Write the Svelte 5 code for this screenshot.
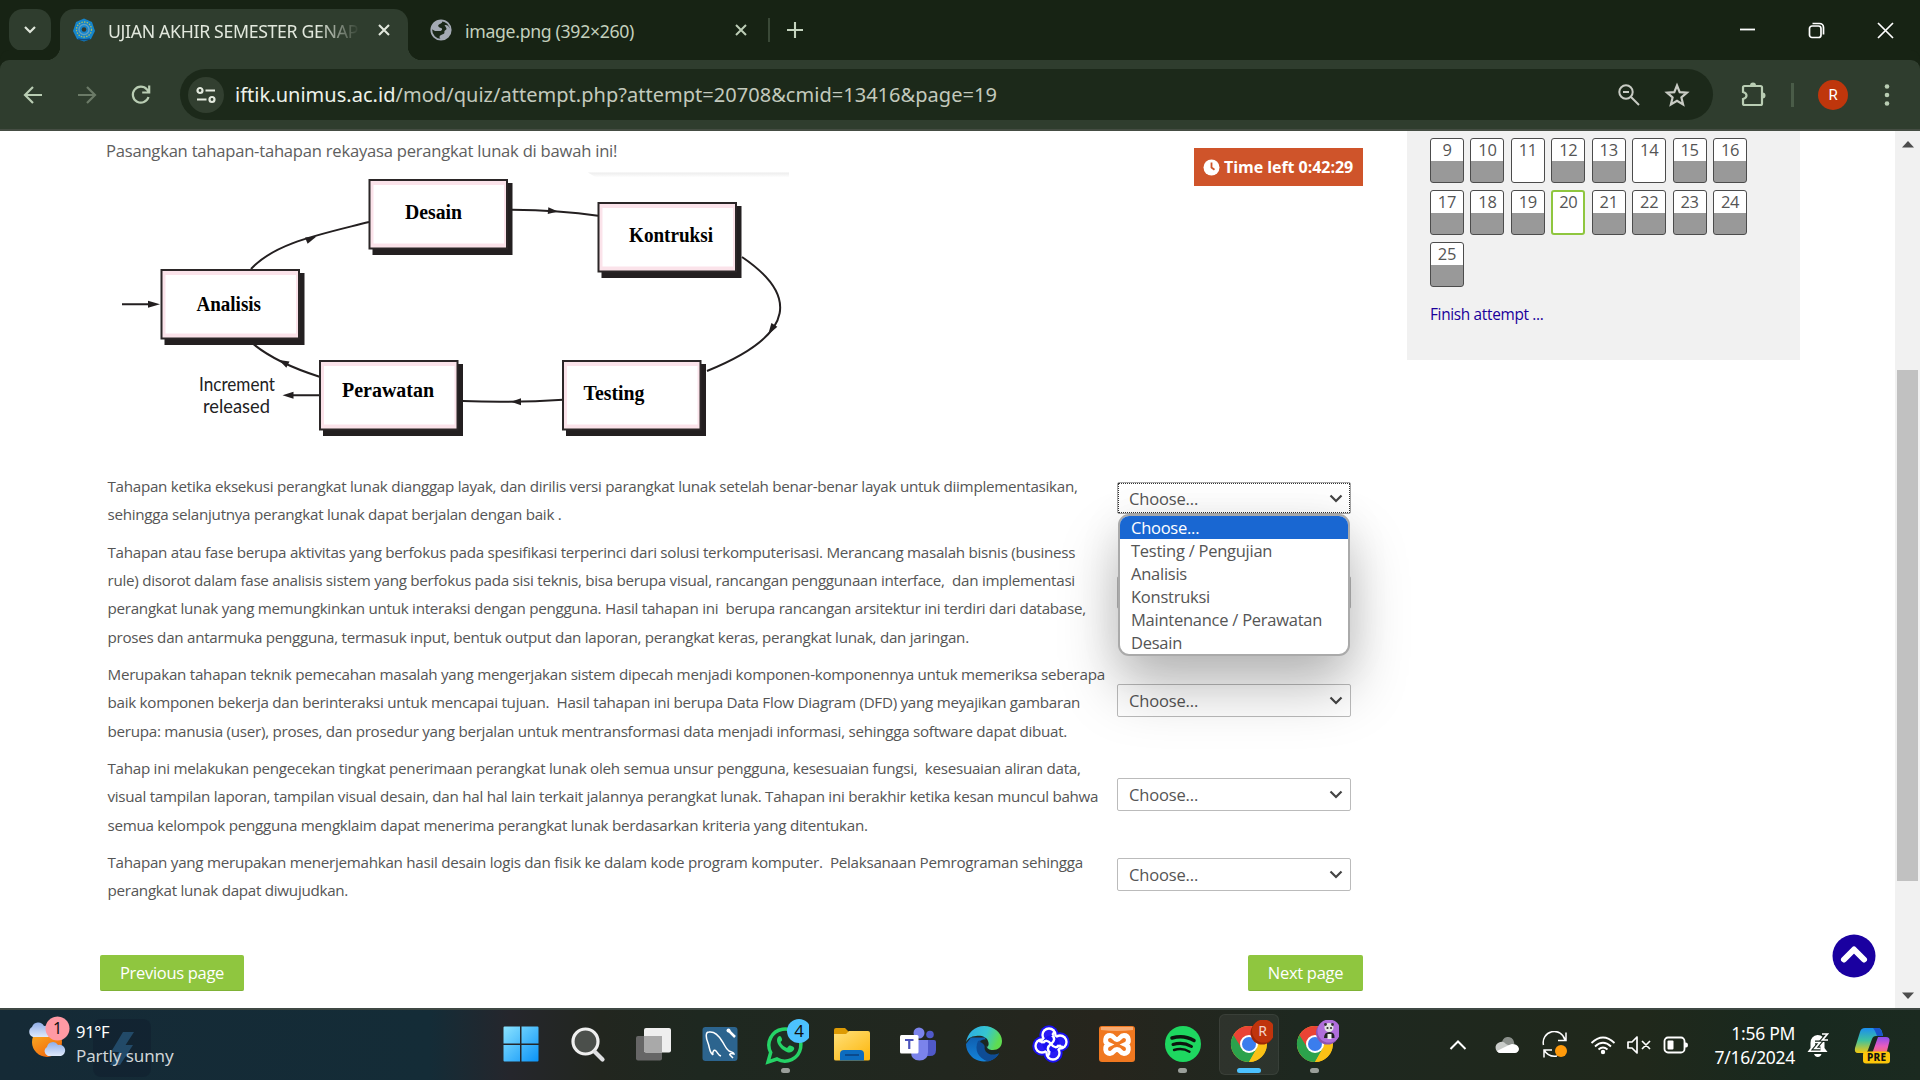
<script>
  const rows = [
    {
      lines: [
        'Tahapan ketika eksekusi perangkat lunak dianggap layak, dan dirilis versi parangkat lunak setelah benar-benar layak untuk diimplementasikan,',
        'sehingga selanjutnya perangkat lunak dapat berjalan dengan baik .'
      ],
      open: true
    },
    {
      lines: [
        'Tahapan atau fase berupa aktivitas yang berfokus pada spesifikasi terperinci dari solusi terkomputerisasi. Merancang masalah bisnis (business',
        'rule) disorot dalam fase analisis sistem yang berfokus pada sisi teknis, bisa berupa visual, rancangan penggunaan interface,\u00a0 dan implementasi',
        'perangkat lunak yang memungkinkan untuk interaksi dengan pengguna. Hasil tahapan ini\u00a0 berupa rancangan arsitektur ini terdiri dari database,',
        'proses dan antarmuka pengguna, termasuk input, bentuk output dan laporan, perangkat keras, perangkat lunak, dan jaringan.'
      ]
    },
    {
      lines: [
        'Merupakan tahapan teknik pemecahan masalah yang mengerjakan sistem dipecah menjadi komponen-komponennya untuk memeriksa seberapa',
        'baik komponen bekerja dan berinteraksi untuk mencapai tujuan.\u00a0 Hasil tahapan ini berupa Data Flow Diagram (DFD) yang meyajikan gambaran',
        'berupa: manusia (user), proses, dan prosedur yang berjalan untuk mentransformasi data menjadi informasi, sehingga software dapat dibuat.'
      ]
    },
    {
      lines: [
        'Tahap ini melakukan pengecekan tingkat penerimaan perangkat lunak oleh semua unsur pengguna, kesesuaian fungsi,\u00a0 kesesuaian aliran data,',
        'visual tampilan laporan, tampilan visual desain, dan hal hal lain terkait jalannya perangkat lunak. Tahapan ini berakhir ketika kesan muncul bahwa',
        'semua kelompok pengguna mengklaim dapat menerima perangkat lunak berdasarkan kriteria yang ditentukan.'
      ]
    },
    {
      lines: [
        'Tahapan yang merupakan menerjemahkan hasil desain logis dan fisik ke dalam kode program komputer.\u00a0 Pelaksanaan Pemrograman sehingga',
        'perangkat lunak dapat diwujudkan.'
      ]
    }
  ];
  const options = ['Choose...', 'Testing / Pengujian', 'Analisis', 'Konstruksi', 'Maintenance / Perawatan', 'Desain'];
  // The first row of the grid is scrolled away except for its bottom edge.
  const hiddenRow = Array.from({ length: 8 });
  const questions = Array.from({ length: 17 }, (_, i) => i + 9);
  const unanswered = [11, 14, 20];
  const stages = [
    { x: 368.5, y: 179, label: 'Desain', tx: 405, ty: 219, w: 57 },
    { x: 597.5, y: 202, label: 'Kontruksi', tx: 629, ty: 241.5, w: 84 },
    { x: 160.5, y: 269, label: 'Analisis', tx: 196.5, ty: 310.5, w: 64.5 },
    { x: 319, y: 360, label: 'Perawatan', tx: 342, ty: 396.5, w: 92 },
    { x: 562, y: 360, label: 'Testing', tx: 583.5, ty: 399.5, w: 61 }
  ];
  const petals = [[18, 11], [29, 18], [22, 29], [11, 22]];
</script>

{#snippet chrome()}
  <circle cx="20" cy="20" r="18" fill="#fbc116" />
  <path d="M4.400 11a18 18 0 0 0 15.600 27l8-13.500-8-4.500z" fill="#2ba24c" />
  <path d="M20 12h15.900A18 18 0 0 1 20 38l7.600-13.500z" fill="#fbc116" />
  <path d="M4.400 11a18 18 0 0 1 31.600 1H20l-7.500 12z" fill="#ea4335" />
  <circle cx="20" cy="20" r="9" fill="#fff" />
  <circle cx="20" cy="20" r="7" fill="#3b7ded" />
{/snippet}

<div class="screen">
  <header class="tabs">
    <button class="tab-search" aria-label="Search tabs">
      <svg width="14" height="10" viewBox="0 0 14 10"><path d="m2 2 5 5 5-5" fill="none" stroke="#dfe6da" stroke-width="2.200" /></svg>
    </button>
    <div class="tab active">
      <svg class="favicon" width="24" height="24" viewBox="0 0 24 24">
        <path d="M12 0.500 20 4l3 9-4 8-7 2.500-7-2.500-4-8 3-9z" fill="#1585cc" />
        <circle cx="12" cy="11.500" r="7.500" fill="none" stroke="#a9bb62" stroke-width="1.300" stroke-dasharray="1.500 1.200" />
        <circle cx="12" cy="11.500" r="5" fill="none" stroke="#5f9fc4" stroke-width="1.400" />
        <circle cx="12" cy="11.500" r="2.300" fill="#33392f" />
        <path d="M6 21q6 1.500 12 0" stroke="#0d4d85" fill="none" stroke-width="1.500" />
      </svg>
      <span class="tab-title fade">UJIAN AKHIR SEMESTER GENAP</span>
      <svg class="x" width="14" height="14" viewBox="0 0 14 14"><path d="m2 2 10 10M12 2 2 12" stroke="#e2e8dd" stroke-width="2.100" /></svg>
    </div>
    <div class="tab second">
      <svg class="favicon" width="22" height="22" viewBox="0 0 22 22">
        <circle cx="11" cy="11" r="9.700" fill="#1b2818" stroke="#a4aab4" stroke-width="1.800" />
        <path d="M12 1.500c1 2-1 3-3 4s0 3 2 3.500 1 3-1 3H5l-3.500-2C2 5 6 1 12 1.500zM15 6c3 0 5 2 5.500 5s-2 7-6 9c-3 1-5 0-5-2s2-2 4-3 0-2 1.500-3.500 2-1 1-3-2-2.500-1-2.500z" fill="#a4aab4" />
      </svg>
      <span class="tab-title">image.png (392×260)</span>
      <svg class="x" width="14" height="14" viewBox="0 0 14 14"><path d="m2 2 10 10M12 2 2 12" stroke="#bccdb6" stroke-width="2" /></svg>
    </div>
    <i class="tab-sep"></i>
    <svg class="plus" width="18" height="18" viewBox="0 0 18 18"><path d="M9 1v16M1 9h16" stroke="#c5d4bf" stroke-width="2.100" /></svg>
    <div class="window">
      <svg width="17" height="17" viewBox="0 0 17 17"><path d="M1 7.500h15" stroke="#fff" stroke-width="1.800" /></svg>
      <svg width="17" height="17" viewBox="0 0 17 17"><rect x="1.500" y="4" width="11.500" height="11.500" rx="2.500" fill="none" stroke="#fff" stroke-width="1.700" /><path d="M4.500 1.500h7a4 4 0 0 1 4 4v7" fill="none" stroke="#fff" stroke-width="1.700" /></svg>
      <svg width="17" height="17" viewBox="0 0 17 17"><path d="m1 1 15 15M16 1 1 16" stroke="#fff" stroke-width="1.700" /></svg>
    </div>
  </header>

  <nav class="toolbar">
    <svg width="22" height="22" viewBox="0 0 22 22"><path d="M20 11H4M11 3l-8 8 8 8" fill="none" stroke="#b9cdb3" stroke-width="2.200" /></svg>
    <svg width="22" height="22" viewBox="0 0 22 22"><path d="M2 11h16M11 3l8 8-8 8" fill="none" stroke="#6b7a67" stroke-width="2.200" /></svg>
    <svg width="22" height="22" viewBox="0 0 22 22"><path d="M18.500 13a8 8 0 1 1-1.500-7.500L19 8M19.200 1.500V8.500h-7" fill="none" stroke="#b9cdb3" stroke-width="2.200" /></svg>
    <div class="omnibox">
      <span class="site">
        <svg width="20" height="18" viewBox="0 0 20 18"><g fill="none" stroke="#e3e9de" stroke-width="2.200"><circle cx="4" cy="4.500" r="2.500" /><path d="M9.500 4.500H19M1 13.500h9.500" /><circle cx="16" cy="13.500" r="2.500" /></g></svg>
      </span>
      <span class="url"><b>iftik.unimus.ac.id</b>/mod/quiz/attempt.php?attempt=20708&amp;cmid=13416&amp;page=19</span>
      <svg width="22" height="22" viewBox="0 0 22 22"><g fill="none" stroke="#c8cbc4" stroke-width="2"><circle cx="8" cy="8" r="6.700" /><path d="m13 13 8 8M5 8h6" /></g></svg>
      <svg class="star" width="26" height="26" viewBox="0 0 26 26"><path d="m13 3.500 2.700 6.700 7.200.5-5.500 4.700 1.700 7.100-6.100-3.800-6.100 3.800 1.700-7.100L3.100 10.700l7.200-.5z" fill="none" stroke="#c8cbc4" stroke-width="2.200" /></svg>
    </div>
    <svg class="puzzle" width="28" height="28" viewBox="0 0 28 28"><path d="M4 6.500q0-1.500 1.500-1.500h16q1.500 0 1.500 1.500v16q0 1.500-1.500 1.500h-16Q4 24 4 22.500v-4.500q3.500-1 3.500-3.500T4 11z" fill="none" stroke="#b9cdb3" stroke-width="2.200" /><path d="M11 4.500a3 3 0 0 1 6 0zM23.500 11.500a3 3 0 0 1 0 6z" fill="#b9cdb3" /></svg>
    <i class="bar-sep"></i>
    <span class="avatar">R</span>
    <svg class="dots" width="6" height="22" viewBox="0 0 6 22"><g fill="#b9cdb3"><circle cx="3" cy="2.500" r="2.300" /><circle cx="3" cy="11" r="2.300" /><circle cx="3" cy="19.500" r="2.300" /></g></svg>
  </nav>

  <main class="page">
    <section class="quiz">
      <div class="head">
        <p class="prompt">Pasangkan tahapan-tahapan rekayasa perangkat lunak di bawah ini!</p>
        <div class="timer">
          <svg width="17" height="17" viewBox="0 0 17 17"><circle cx="8.500" cy="8.500" r="8" fill="#fff" /><path d="M8.500 3.500v5l3 2.300" fill="none" stroke="#cf542a" stroke-width="1.800" /></svg>
          <span>Time left 0:42:29</span>
        </div>
      </div>
      <svg class="diagram" width="700" height="270" viewBox="100 170 700 270">
        <defs>
          <linearGradient id="haze" x2="0" y2="1"><stop stop-color="#ececec" /><stop offset="1" stop-color="#fff" /></linearGradient>
        </defs>
        <path d="M588 172.500h201v5H596z" fill="url(#haze)" />
        <g fill="none" stroke="#231f20" stroke-width="2">
          <path d="M251 269C275 243 318 235 369 222M512 209.700Q560 210 598 215.700M742 257C795 293 801 333 707 371M563 399.700Q512 403 463 401M319.500 376.700Q276 363 252 343M122 304.300h30M319.500 395.300H292" />
        </g>
        <g fill="#231f20">
          <path d="m0 0-11-3.500v7z" transform="translate(316.500 236.500) rotate(-22)" />
          <path d="m0 0-10-3.300v6.600z" transform="translate(558 211.500) rotate(5)" />
          <path d="m0 0-12-3.500v7z" transform="translate(768 335) rotate(122)" />
          <path d="m0 0 10-3.500v7z" transform="translate(511 401.700)" />
          <path d="m0 0-10-3.500v7z" transform="translate(279 360) rotate(207)" />
          <path d="m160 304.300-12-3.500v7zM282.500 395.300l11-3.500v7z" />
        </g>
        {#each stages as s}
          <rect x={s.x + 4} y={s.y + 4} width="140" height="72" fill="#231f20" />
          <rect x={s.x + 1} y={s.y + 1} width="137.500" height="68.500" fill="#fbe3ea" stroke="#2b2627" stroke-width="2" />
          <rect x={s.x + 5} y={s.y + 6} width="130.500" height="58.500" fill="#fff" />
          <text class="stage" x={s.tx} y={s.ty} textLength={s.w} lengthAdjust="spacingAndGlyphs">{s.label}</text>
        {/each}
        <text class="note" x="199" y="390.500" textLength="76" lengthAdjust="spacingAndGlyphs">Increment</text>
        <text class="note" x="203" y="413" textLength="67" lengthAdjust="spacingAndGlyphs">released</text>
      </svg>

      <div class="matches">
        {#each rows as row}
          <div class="match">
            <div class="text">
              {#each row.lines as line}<p>{line}</p>{/each}
            </div>
            <div class="answer">
              <div class="select" class:open={row.open}>
                <span>Choose...</span>
                <svg width="14" height="9" viewBox="0 0 14 9"><path d="m1.500 1.500 5.500 5.500 5.500-5.500" fill="none" stroke="#444" stroke-width="2.200" /></svg>
              </div>
              {#if row.open}
                <ul class="menu">
                  {#each options as o, i}<li class:picked={i === 0}>{o}</li>{/each}
                </ul>
              {/if}
            </div>
          </div>
        {/each}
      </div>
      <div class="buttons">
        <button class="green">Previous page</button>
        <button class="green next">Next page</button>
      </div>
    </section>

    <aside class="panel">
      <div class="grid">
        {#each hiddenRow as _}<span class="q"></span>{/each}
        {#each questions as q}
          <span class="q" class:blank={unanswered.includes(q)} class:current={q === 20}>{q}</span>
        {/each}
      </div>
      <a class="finish" href="#finish">Finish attempt ...</a>
    </aside>

    <div class="scroll">
      <svg width="12" height="8" viewBox="0 0 12 8"><path d="M6 1 12 7.500H0z" fill="#4d4d4d" /></svg>
      <i class="thumb"></i>
      <svg class="down" width="12" height="8" viewBox="0 0 12 8"><path d="M6 7 0 .5h12z" fill="#4d4d4d" /></svg>
    </div>
    <svg class="to-top" width="44" height="44" viewBox="0 0 44 44"><circle cx="22" cy="22" r="21.500" fill="#1a00a0" /><path d="m12 25.500 10-10 10 10" fill="none" stroke="#fff" stroke-width="6" stroke-linejoin="round" stroke-linecap="round" /></svg>
  </main>

  <footer class="taskbar">
    <div class="weather">
      <svg width="46" height="50" viewBox="0 0 46 50">
        <defs>
          <linearGradient id="sun" x2=".6" y2="1"><stop stop-color="#fbb829" /><stop offset="1" stop-color="#f26a0c" /></linearGradient>
          <linearGradient id="cloud" x2="0" y2="1"><stop stop-color="#8faee8" /><stop offset="1" stop-color="#dfe9fb" /></linearGradient>
        </defs>
        <circle cx="21" cy="29" r="15" fill="url(#sun)" />
        <path d="M7 24a5.500 5.500 0 0 1-1-10 6.500 6.500 0 0 1 12-1 5 5 0 0 1 4 11z" fill="url(#cloud)" />
        <path d="M22 43a5 5 0 0 1-1-9 6 6 0 0 1 11-2 5 5 0 0 1 3 11z" fill="url(#cloud)" />
        <circle cx="31.500" cy="15.500" r="12" fill="#ff99a4" />
        <text x="31.500" y="21" text-anchor="middle" font-size="16" fill="#111">1</text>
      </svg>
      <div class="ghost">
        <svg width="58" height="58" viewBox="0 0 58 58"><rect width="58" height="58" rx="8" fill="#11202f" /><path d="M30 13h11L28 33H18zM31 26h9L27 46H17z" fill="#2c5f8a" /></svg>
      </div>
      <div class="forecast"><span>91°F</span><span class="dim">Partly sunny</span></div>
    </div>

    <div class="apps">
      <div class="app">
        <svg width="40" height="40" viewBox="0 0 40 40">
          <defs><linearGradient id="win" x2="1" y2="1"><stop stop-color="#8be3ff" /><stop offset="1" stop-color="#0a93f8" /></linearGradient></defs>
          <path d="M2.500 3.500a1 1 0 0 1 1-1H19v17H2.500zM20.500 2.500h16a1 1 0 0 1 1 1v16h-17zM2.500 21H19v16.500H3.500a1 1 0 0 1-1-1zM20.500 21h17v15.500a1 1 0 0 1-1 1h-16z" fill="url(#win)" />
        </svg>
      </div>
      <div class="app">
        <svg width="40" height="40" viewBox="0 0 40 40"><circle cx="18.500" cy="17.500" r="12.500" fill="#4b4f4b" stroke="#efefef" stroke-width="3.200" /><path d="m28 28 7.500 7.500" stroke="#dfe0e2" stroke-width="4.200" stroke-linecap="round" /></svg>
      </div>
      <div class="app">
        <svg width="40" height="40" viewBox="0 0 40 40"><rect x="3" y="12" width="26" height="24.500" rx="2" fill="#666" /><rect x="11" y="4" width="27" height="24.500" rx="2" fill="#efefef" /><path d="M11 12h18v16.500H13a2 2 0 0 1-2-2z" fill="#a9a9a9" /></svg>
      </div>
      <div class="app">
        <svg width="40" height="40" viewBox="0 0 40 40"><rect x="2.500" y="3" width="35" height="34" rx="3" fill="#2c648e" /><g fill="none" stroke="#fff" stroke-width="1.500"><path d="M13 31c-4-3-3-7-5-12S5 8 9 8c6-1 10 4 13 9 3 4 3 7 7 10 3 1 5 2 5 3-3-1-5 0-4 1l3 3M13 31c-1-3 1-6 3-4s2 4 5 5" /></g><path d="m28 6 7 7" stroke="#fff" stroke-width="2.500" /><circle cx="28.500" cy="6.500" r="2" fill="#fff" /></svg>
      </div>
      <div class="app">
        <svg width="46" height="50" viewBox="0 0 46 50">
          <path d="m5 43 2.700-9.500A16 16 0 1 1 14 40z" fill="#1f2d22" stroke="#25d366" stroke-width="3.500" />
          <path d="M15 18c2-2 3-1 4 2 .5 2-1 2-1.500 3 1 3 4 5 6.500 6 1-1 2-3 3-2.500 3 1 5 1.500 4 4s-4 3-6 3c-6-2-11-8-11-12 0-1 0-2 1-3.500z" fill="#25d366" />
          <circle cx="36" cy="12" r="12" fill="#4cc2ff" /><text x="36" y="18" text-anchor="middle" font-size="17" fill="#111">4</text>
        </svg><i class="dot"></i>
      </div>
      <div class="app">
        <svg width="40" height="40" viewBox="0 0 40 40"><defs><linearGradient id="fold" x2=".8" y2="1"><stop stop-color="#ffe07a" /><stop offset="1" stop-color="#fdb913" /></linearGradient></defs><path d="M2 6q0-2 2-2h9l4 4v8H2z" fill="#dd9a04" /><path d="M2 10h12l3-3h19q2 0 2 2v26q0 1.500-2 1.500H4q-2 0-2-1.500z" fill="url(#fold)" /><path d="M8 36.500V30q0-4 4-4h16q4 0 4 4v6.500z" fill="#0c6cbf" /><path d="M13 31h14" stroke="#0a3f7c" stroke-width="1.500" /></svg>
      </div>
      <div class="app">
        <svg width="40" height="40" viewBox="0 0 40 40"><circle cx="21" cy="9" r="5.500" fill="#7b83eb" /><circle cx="32" cy="10.500" r="3.800" fill="#5059c9" /><path d="M27 16h9q2 0 2 2v8q0 6-6 6h-5z" fill="#5059c9" /><path d="M13 16h17v12q0 8.500-8.500 8.500T13 28z" fill="#7b83eb" /><rect x="2" y="11" width="18.500" height="18.500" rx="1.500" fill="#fff" /><path d="M7 16h8.500M11.250 16v9" stroke="#4b53bc" stroke-width="2.200" /></svg>
      </div>
      <div class="app">
        <svg width="40" height="40" viewBox="0 0 40 40">
          <defs>
            <linearGradient id="edgeA" x2="1" y2=".3"><stop stop-color="#2aa9e8" /><stop offset=".6" stop-color="#36c6d0" /><stop offset="1" stop-color="#5fdc50" /></linearGradient>
            <linearGradient id="edgeB" x2="0" y2="1"><stop stop-color="#0f5fb0" /><stop offset="1" stop-color="#1484da" /></linearGradient>
          </defs>
          <path d="M2 20a18 18 0 0 0 33 9.500c-4 2-8 1-11-2l-3-14H7z" fill="url(#edgeB)" />
          <path d="M14 17c-4 9 0 17 10 20.500 5-1 9-4.500 11-8.500-8 3-14 0-14.500-6.500V15z" fill="#0e4c95" />
          <path d="M2 19C3 9 11 2 20 2c10 0 18 7 18 15 0 6-4 9-9 9-4 0-5-1-6-3 2-1 2-4 1-6-1-4-7-6-12-5-5 0-9 3-10 7z" fill="url(#edgeA)" />
          <path d="M16 18c2-3 6-3 7-1 1 3-1 5 0 7 2 4 7 3 11 2l1 3c-8 4-15 0-14.500-6.500 0-2-2-3.500-4.500-4.500z" fill="#1a2723" />
        </svg>
      </div>
      <div class="app">
        <svg width="40" height="40" viewBox="0 0 40 40">
          {#each petals as [x, y]}<circle cx={x} cy={y} r="9.700" fill="#1a10f2" />{/each}
          {#each petals as [x, y]}<circle cx={x} cy={y} r="7.700" fill="#fff" />{/each}
          {#each petals as [x, y]}<circle cx={x} cy={y} r="5.300" fill="#2a1cf5" />{/each}
          <circle cx="20" cy="20" r="8.500" fill="#1a10f2" />
          <path d="M20 20c-3-4-6-4-8-1M20 20c4-3 4-6 1-9M20 20c3 4 6 4 8 1M20 20c-4 3-4 6-1 9M12 19q-1.500-2-4-2M21 11q2-1 2-3.500M28 21q1.500 2 4 2M19 29q-2 1-2 3.500" fill="none" stroke="#fff" stroke-width="2.500" />
        </svg>
      </div>
      <div class="app">
        <svg width="40" height="40" viewBox="0 0 40 40"><rect x="2" y="2" width="36" height="36" rx="3" fill="#f07820" /><path d="M4 3h32v3q-16 2-32 0z" fill="#f8ab72" /><path d="M13 11.500c4 0 4 4 7 4s3-4 7-4c5 0 6 7 1.500 9 4.500 2 3.500 9-1.500 9-4 0-3-4-7-4s-3 4-7 4c-5 0-6-7-1.500-9-4.500-2-3.500-9 1.500-9z" fill="none" stroke="#fff" stroke-width="4.800" /></svg>
      </div>
      <div class="app">
        <svg width="40" height="40" viewBox="0 0 40 40"><circle cx="20" cy="20" r="18" fill="#1ed760" /><g fill="none" stroke="#0d150f" stroke-linecap="round"><path d="M9 14q12-3.500 22 2.500" stroke-width="3.500" /><path d="M10 20.500q10-3 18.500 2" stroke-width="3" /><path d="M11 26q8.500-2.500 15.500 1.700" stroke-width="2.400" /></g></svg><i class="dot"></i>
      </div>
      <div class="app focus">
        <svg width="48" height="48" viewBox="-4 -4 48 48">
          {@render chrome()}<circle cx="33" cy="9" r="11.500" fill="#9c2607" /><circle cx="34.500" cy="7" r="11.500" fill="#c0340c" /><text x="33.500" y="12" text-anchor="middle" font-size="14" fill="#f3d3ca">R</text>
        </svg><i class="dot wide"></i>
      </div>
      <div class="app">
        <svg width="48" height="48" viewBox="-4 -4 48 48">
          {@render chrome()}<circle cx="32.500" cy="9" r="11.500" fill="#8d52b5" /><circle cx="34" cy="7" r="11.500" fill="#b06edb" /><path d="M29 14q0-6 5.500-6t5 6z" fill="#222" /><path d="M32.500 10h4v5h-4z" fill="#eee" /><circle cx="34" cy="3.500" r="4.500" fill="#e4e4e4" /><circle cx="32.500" cy="4" r="1.100" fill="#333" /><circle cx="36" cy="4" r="1.100" fill="#333" /><circle cx="30.500" cy="0.500" r="1.400" fill="#333" /><circle cx="37.500" cy="0.500" r="1.400" fill="#333" />
        </svg><i class="dot"></i>
      </div>
    </div>

    <div class="tray">
      <svg width="18" height="12" viewBox="0 0 18 12"><path d="m1.500 10 7.500-7.500 7.500 7.500" fill="none" stroke="#fff" stroke-width="2" /></svg>
      <svg class="t-cloud" width="26" height="18" viewBox="0 0 26 18"><path d="M8 8a6 6 0 0 1 12-2l1 6H8z" fill="#8b908b" /><path d="M6 17a5.500 5.500 0 0 1-1-10.500A6 6 0 0 1 12 8l8 4-4 5z" fill="#c9ccc9" /><path d="M3 15c4-2 11-6 15-7 5 0 7 3 7 5s-2 4-4 4H6q-2 0-3-2z" fill="#fff" /></svg>
      <svg class="t-sync" width="26" height="28" viewBox="0 0 26 28"><g fill="none" stroke="#fff" stroke-width="1.500"><path d="M1.500 14A11 11 0 0 1 23 9M24 1.500V9.500h-8M10 19H2v7.500M2 19c3 5 7 7 13 6" /></g><circle cx="19" cy="20" r="6" fill="#ff9a0b" /></svg>
      <svg class="t-wifi" width="26" height="20" viewBox="0 0 26 20"><g fill="none" stroke="#fff" stroke-width="1.800"><path d="M1.500 8q11.500-11 23 0M5 11.500q8-7.500 16 0M8.500 14.500q4.500-4 9 0" /></g><circle cx="13" cy="17" r="2.200" fill="#fff" /></svg>
      <svg class="t-vol" width="26" height="20" viewBox="0 0 26 20"><g fill="none" stroke="#fff" stroke-width="1.700"><path d="M2 7h4l5-5v16l-5-5H2zM16 6l8 8M24 6l-8 8" stroke-linejoin="round" /></g></svg>
      <svg class="t-bat" width="26" height="18" viewBox="0 0 26 18"><rect x="1.500" y="1.500" width="20" height="15" rx="3.500" fill="none" stroke="#fff" stroke-width="1.800" /><rect x="4.500" y="4.500" width="6" height="9" rx="1" fill="#fff" /><path d="M22 6.500h1q2 0 2 2.500t-2 2.500h-1z" fill="#fff" /></svg>
      <div class="clock"><span>1:56 PM</span><span>7/16/2024</span></div>
      <svg class="t-bell" width="22" height="26" viewBox="0 0 22 26"><path d="M3.500 11a7.500 7.500 0 0 1 7-8q7 0 7 8v5l3 4H.5l3-4zM7 22h7.500q-1 3-3.700 3T7 22z" fill="#fff" /><path d="M8 10.500h5l-5 6h5.500" fill="none" stroke="#18261d" stroke-width="4" /><path d="M15 2h5.500l-5 6h5.500" fill="none" stroke="#18261d" stroke-width="4" /><path d="M8 10.500h5l-5 6h5.500M15 2h5.500l-5 6h5.500" fill="none" stroke="#fff" stroke-width="1.700" /></svg>
      <svg class="t-pilot" width="38" height="38" viewBox="0 0 38 38">
        <defs>
          <linearGradient id="cpA" x2="0" y2="1"><stop stop-color="#1b8df0" /><stop offset=".5" stop-color="#3fc29d" /><stop offset="1" stop-color="#f5c80d" /></linearGradient>
          <linearGradient id="cpB" x2="0" y2="1"><stop stop-color="#8a4df0" /><stop offset=".5" stop-color="#e65bc0" /><stop offset="1" stop-color="#fb7a55" /></linearGradient>
        </defs>
        <path d="M12 2h13q3 0 4 4l1 4h-7q-3 0-4 3l-4 11q-1 3-4 3H5q-4 0-3-5L7 6q1-4 5-4z" fill="url(#cpA)" />
        <path d="M20 2h5q3 0 4 4l1 4h-6q-2-6-4-8z" fill="#1a54cc" />
        <path d="M25 11h8q4 0 3.500 4L34 25q-1 4-5 4H16q3-1 4-4z" fill="url(#cpB)" />
        <rect x="10" y="25.500" width="27" height="12" rx="3" fill="#fcc60a" />
        <text x="23.700" y="35" text-anchor="middle" font-size="10" font-weight="800" fill="#111" letter-spacing=".3">PRE</text>
      </svg>
    </div>
  </footer>
</div>

<style>
  :global(body) { margin: 0; background: #fff; overflow: hidden; }
  .screen { width: 1920px; height: 1080px; display: flex; flex-direction: column; font-family: 'Open Sans', 'Noto Sans', sans-serif; overflow: hidden; }
  svg { display: block; flex: none; }
  p, ul { margin: 0; padding: 0; list-style: none; }
  button { border: 0; padding: 0; font: inherit; }

  .tabs { height: 60px; flex: none; background: #172314; display: flex; align-items: center; }
  .tab-search { width: 42px; height: 42px; margin-left: 9px; border-radius: 14px; background: #2f3d2e; display: grid; place-items: center; }
  .tab { display: flex; align-items: center; box-sizing: border-box; height: 51px; align-self: flex-end; padding-bottom: 9px; }
  .active { position: relative; z-index: 1; width: 348px; margin-left: 9px; padding-left: 12px; background: #2f3d2e; border-radius: 14px 14px 0 0; }
  .active::before, .active::after { content: ''; position: absolute; bottom: 0; width: 14px; height: 14px; }
  .active::before { left: -14px; background: radial-gradient(circle at 0 0, transparent 14px, #2f3d2e 14.500px); }
  .active::after { right: -14px; background: radial-gradient(circle at 100% 0, transparent 14px, #2f3d2e 14.500px); }
  .tab-title { font-family: 'Noto Sans', sans-serif; font-size: 17.700px; letter-spacing: -0.330px; line-height: 26px; padding-top: 2px; color: #c3d0bd; white-space: nowrap; overflow: hidden; margin-left: 12px; }
  .fade { width: 252px; color: #e2e8dd; mask-image: linear-gradient(90deg, #000 83%, transparent); }
  .active .x { margin-left: 17px; }
  .second { width: 348px; padding-left: 22px; }
  .second .tab-title { width: 250px; margin-left: 13px; }
  .second .x { margin-left: 19px; }
  .tab-sep { width: 2px; height: 24px; background: #3a4937; margin-left: 12px; }
  .plus { margin-left: 16px; }
  .window { display: flex; gap: 52px; margin-left: auto; margin-right: 26px; }

  .toolbar { height: 71px; flex: none; box-sizing: border-box; background: #2f3d2e; border-bottom: 2px solid #454d43; border-radius: 9px 9px 0 0; box-shadow: 0 -10px 0 #172314; display: flex; align-items: center; padding: 0 0 0 22px; gap: 32px; }
  .omnibox { width: 1533px; height: 51px; margin-left: -4px; border-radius: 26px; background: #1c291a; box-sizing: border-box; display: flex; align-items: center; padding: 0 23px 0 8px; }
  .site { width: 36px; height: 36px; border-radius: 50%; background: #323f30; display: grid; place-items: center; }
  .url { flex: 1; margin-left: 11px; font-family: 'Noto Sans', sans-serif; font-size: 20px; letter-spacing: .03px; color: #c3c9bd; white-space: nowrap; }
  .url b { font-weight: 400; color: #eef2ea; }
  .star { margin-left: 24px; }
  .puzzle { margin-left: -6px; }
  .bar-sep { width: 3px; height: 24px; background: #4a5c48; margin-left: -8px; flex: none; }
  .avatar { width: 30px; height: 30px; border-radius: 50%; background: #bf360c; color: #fff; font: 15px/30px Roboto, sans-serif; text-align: center; margin-left: -8px; flex: none; }
  .dots { margin-left: 4px; }

  .page { position: relative; height: 877px; flex: none; display: flex; background: #fff; overflow: hidden; color: #555; }
  .quiz { width: 1263px; margin-left: 100px; flex: none; }
  .head { display: flex; justify-content: space-between; height: 39px; }
  .prompt { font-size: 16.600px; letter-spacing: -0.230px; line-height: 22px; padding: 9px 0 0 6px; color: #5e5e5e; white-space: nowrap; }
  .timer { height: 38px; width: 169px; box-sizing: border-box; margin-top: 17px; padding-left: 9px; background: #cf542a; color: #fff; font-weight: 700; font-size: 16px; display: flex; align-items: center; gap: 4px; white-space: nowrap; letter-spacing: -0.050px; }
  .stage { font: 700 20px 'Liberation Serif', serif; fill: #000; }
  .note { font: 19px Lato, sans-serif; fill: #222; }
  .matches { margin-top: 27.500px; padding-left: 7.500px; }
  .match { display: flex; align-items: center; padding: 4.500px 0; }
  .text { width: 1009.500px; font-size: 15.200px; letter-spacing: -0.280px; line-height: 28.350px; white-space: nowrap; }
  .answer { position: relative; margin-bottom: 4px; }
  .select { width: 234px; height: 33px; box-sizing: border-box; border: 1px solid #bbb; border-radius: 2px; display: flex; align-items: center; justify-content: space-between; padding: 0 7px 0 11px; font-size: 16.500px; letter-spacing: -0.150px; }
  .select.open { border: 1px solid #a5a5a5; outline: 1px dotted #333; outline-offset: -2px; height: 32px; }
  .menu { position: absolute; z-index: 3; top: 32px; left: 1px; width: 232px; box-sizing: border-box; border: 2px solid #aaa; border-radius: 11px; background: #fff; overflow: hidden; box-shadow: 0 32px 58px rgba(0, 0, 0, .26), 0 6px 44px rgba(0, 0, 0, .08); }
  .menu li { height: 23px; line-height: 23px; padding-left: 11px; font-size: 16.500px; letter-spacing: -0.250px; white-space: nowrap; }
  .menu .picked { background: #1967d2; color: #fff; }
  .buttons { display: flex; justify-content: space-between; margin-top: 46px; }
  .green { width: 144px; height: 36px; border-radius: 2px; background: #8fc63f; border-bottom: 1px solid #7fb236; color: #fff; font-size: 16.500px; letter-spacing: -0.300px; }
  .next { width: 115px; }

  .panel { width: 393px; height: 229px; margin-left: 44px; box-sizing: border-box; padding-left: 23px; background: #f1f1f1; flex: none; overflow: hidden; }
  .grid { display: grid; grid-template-columns: repeat(8, 34px); grid-auto-rows: 45px; column-gap: 6.450px; row-gap: 7px; margin-top: -45px; }
  .q { box-sizing: border-box; border: 1.500px solid #4c4c4c; border-radius: 3px; background: linear-gradient(#fff 22px, #999 22px); text-align: center; font-size: 16.500px; letter-spacing: -0.300px; line-height: 21px; color: #555; }
  .q.blank { background: #fff; }
  .q.current { border: 2px solid #8fc63f; line-height: 19.500px; }
  .finish { display: block; margin-top: 17px; font-size: 15.400px; letter-spacing: -0.330px; line-height: 22px; color: #1a009b; text-decoration: none; }
  .scroll { width: 25px; margin-left: auto; background: #f1f1f1; display: flex; flex-direction: column; align-items: center; padding-top: 9px; box-sizing: border-box; }
  .thumb { width: 21px; height: 511px; margin-top: 222px; background: #c1c1c1; }
  .down { margin-top: 111px; }
  .to-top { position: absolute; left: 1832px; top: 802.500px; }

  .taskbar { height: 72px; flex: none; box-sizing: border-box; border-top: 2px solid #3f4844; background: linear-gradient(90deg, #152a36 0, #142c37 430px, #25262c 510px, #22261f 600px, #1e2820 700px, #22271f 950px, #26251d 1100px, #1e2820 1300px, #20281b 1640px, #18291f 1800px, #1b2a20 1920px); display: flex; align-items: center; color: #fff; font-family: 'Noto Sans', sans-serif; }
  .weather { position: relative; display: flex; width: 488px; height: 70px; padding-left: 26px; box-sizing: border-box; align-items: center; }
  .weather > svg { margin-bottom: 14px; }
  .ghost { position: absolute; left: 93px; top: 9px; opacity: .6; }
  .forecast { position: relative; display: flex; flex-direction: column; margin-left: 4px; font-size: 16.500px; line-height: 24px; letter-spacing: -0.300px; white-space: nowrap; margin-bottom: 2px; }
  .dim { color: #cfd5d8; font-size: 17px; letter-spacing: -0.100px; }
  .apps { display: flex; }
  .app { position: relative; width: 66.200px; height: 70px; display: grid; place-items: center; }
  .app > svg { margin-bottom: 2px; }
  .focus::before { content: ''; position: absolute; inset: 4px 3px 5px; border-radius: 6px; background: rgba(255, 255, 255, .06); border: 1px solid rgba(255, 255, 255, .06); }
  .focus > svg { position: relative; }
  .dot { position: absolute; bottom: 7px; left: 28px; width: 9px; height: 5px; border-radius: 3px; background: #9a9f9a; }
  .wide { left: 21px; width: 24px; background: #4cc2ff; }
  .tray { margin-left: auto; margin-right: 29px; display: flex; align-items: center; }
  .t-cloud { margin-left: 27px; }
  .t-sync { margin-left: 22px; }
  .t-wifi { margin-left: 22px; }
  .t-vol { margin-left: 10px; }
  .t-bat { margin-left: 11px; }
  .clock { width: 106px; display: flex; flex-direction: column; text-align: right; font-size: 17.500px; line-height: 24px; letter-spacing: -0.300px; margin-bottom: 1px; }
  .t-bell { margin-left: 12px; }
  .t-pilot { margin-left: 24px; }
</style>
